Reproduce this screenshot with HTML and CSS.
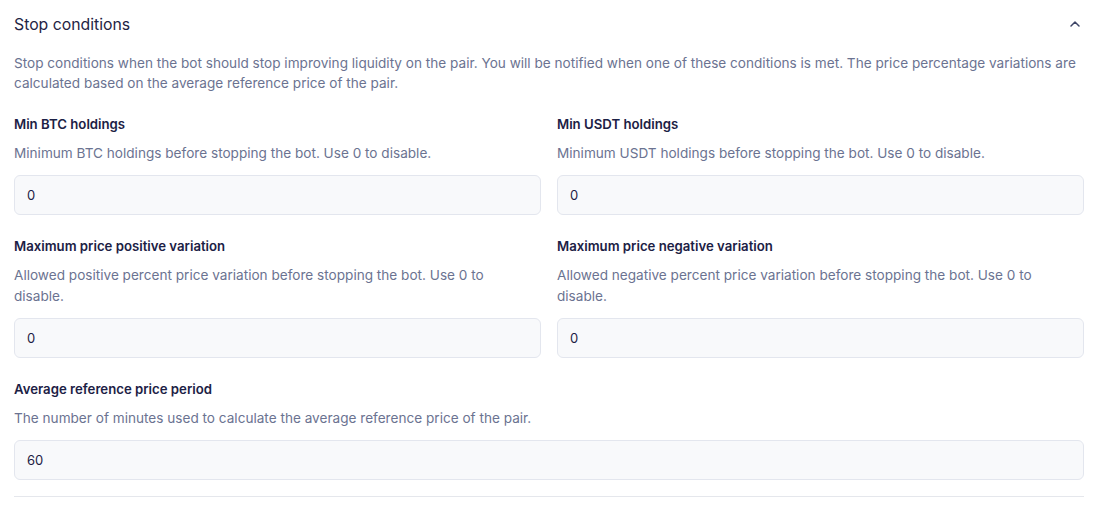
FILE: index.html
```html
<!DOCTYPE html>
<html>
<head>
  <title>Stop conditions</title>
  <link rel="stylesheet" href="styles.css">
</head>
<body>
  <div class="section">
    <div class="section-header">
      <h2>Stop conditions</h2>
      <svg class="chevron" width="12" height="12" viewBox="0 0 12 12">
        <path d="M2 8 L6 4 L10 8" fill="none" stroke="#3d4466" stroke-width="1.5" stroke-linecap="round" stroke-linejoin="round"/>
      </svg>
    </div>

    <p class="section-desc">Stop conditions when the bot should stop improving liquidity on the pair. You will be notified when one of these conditions is met. The price percentage variations are calculated based on the average reference price of the pair.</p>

    <div class="grid">
      <div class="field">
        <label for="minBase">Min BTC holdings</label>
        <p class="help">Minimum BTC holdings before stopping the bot. Use 0 to disable.</p>
        <input id="minBase" type="text" value="0">
      </div>
      <div class="field">
        <label for="minQuote">Min USDT holdings</label>
        <p class="help">Minimum USDT holdings before stopping the bot. Use 0 to disable.</p>
        <input id="minQuote" type="text" value="0">
      </div>
      <div class="field">
        <label for="maxPos">Maximum price positive variation</label>
        <p class="help">Allowed positive percent price variation before stopping the bot. Use 0 to disable.</p>
        <input id="maxPos" type="text" value="0">
      </div>
      <div class="field">
        <label for="maxNeg">Maximum price negative variation</label>
        <p class="help">Allowed negative percent price variation before stopping the bot. Use 0 to disable.</p>
        <input id="maxNeg" type="text" value="0">
      </div>
      <div class="field full">
        <label for="period">Average reference price period</label>
        <p class="help">The number of minutes used to calculate the average reference price of the pair.</p>
        <input id="period" type="text" value="60">
      </div>
    </div>
  </div>
</body>
</html>
```

FILE: styles.css
```css
body {
  margin: 0;
  background: #fff;
  font-family: Inter, "Noto Sans", sans-serif;
  color: #1c2145;
}

.section {
  margin: 0 19px 0 14px;
  padding: 12px 0 16px;
  border-bottom: 1px solid #e5e7ec;
}

.section-header {
  display: flex;
  align-items: center;
  justify-content: space-between;
  height: 24px;
}

.section-header h2 {
  margin: 0;
  font-size: 15.8px;
  font-weight: 400;
  color: #1f2444;
}

.chevron {
  margin-right: 3px;
}

.section-desc {
  margin: 17px 0 0;
  font-size: 13.6px;
  line-height: 20px;
  color: #6b7391;
}

.grid {
  display: grid;
  grid-template-columns: 1fr 1fr;
  column-gap: 16px;
  row-gap: 22px;
  margin-top: 22px;
}

.field.full {
  grid-column: 1 / -1;
}

label {
  display: block;
  font-size: 13.2px;
  font-weight: 600;
  line-height: 18px;
  color: #1c2145;
}

.help {
  margin: 10px 0 11px;
  padding-right: 20px;
  font-size: 13.6px;
  line-height: 21px;
  color: #6b7391;
}

input {
  display: block;
  box-sizing: border-box;
  width: 100%;
  height: 40px;
  padding: 0 12px;
  font-family: inherit;
  font-size: 13px;
  color: #1c2145;
  background: #f8f9fb;
  border: 1px solid #e3e6ee;
  border-radius: 6px;
  outline: none;
}
```
